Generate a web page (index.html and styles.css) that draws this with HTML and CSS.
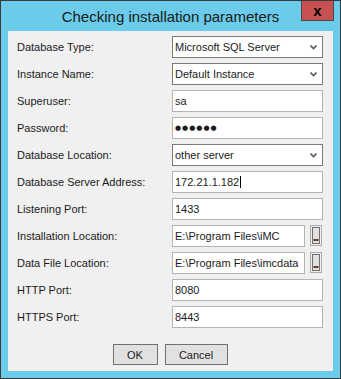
FILE: index.html
```html
<!doctype html>
<html lang="en">
<head>
    <meta charset="UTF-8">
    <title>Checking installation parameters</title>
    <link rel="stylesheet" href="styles.css">
</head>
<body>
    <div class="window">
        <div class="titlebar">
            <div class="title">Checking installation parameters</div>
            <div class="close">x</div>
        </div>
        <div class="panel">
            <div class="form">
                <div class="label">Database Type:</div>
                <div class="combo"><span>Microsoft SQL Server</span><svg class="arrow" width="7" height="5" viewBox="0 0 7 5"><path d="M0.5 0.5 L3.5 3.5 L6.5 0.5" fill="none" stroke="#5c5c5c" stroke-width="1.6"/></svg></div>

                <div class="label">Instance Name:</div>
                <div class="combo"><span>Default Instance</span><svg class="arrow" width="7" height="5" viewBox="0 0 7 5"><path d="M0.5 0.5 L3.5 3.5 L6.5 0.5" fill="none" stroke="#5c5c5c" stroke-width="1.6"/></svg></div>

                <div class="label">Superuser:</div>
                <div class="field">sa</div>

                <div class="label">Password:</div>
                <div class="field dots">●●●●●●</div>

                <div class="label">Database Location:</div>
                <div class="combo"><span>other server</span><svg class="arrow" width="7" height="5" viewBox="0 0 7 5"><path d="M0.5 0.5 L3.5 3.5 L6.5 0.5" fill="none" stroke="#5c5c5c" stroke-width="1.6"/></svg></div>

                <div class="label">Database Server Address:</div>
                <div class="field"><span class="caret">172.21.1.182</span></div>

                <div class="label">Listening Port:</div>
                <div class="field">1433</div>

                <div class="label">Installation Location:</div>
                <div class="browse-row">
                    <div class="field">E:\Program Files\iMC</div>
                    <div class="browse"><span><svg width="6" height="2" viewBox="0 0 6 2"><rect x="0" y="0" width="1" height="2" fill="#c8a000"/><rect x="1" y="0" width="1" height="2" fill="#333"/><rect x="2" y="0" width="1" height="2" fill="#d03030"/><rect x="3" y="0" width="1" height="2" fill="#2050c0"/><rect x="4" y="0" width="1" height="2" fill="#333"/><rect x="5" y="0" width="1" height="2" fill="#c8a000"/></svg></span></div>
                </div>

                <div class="label">Data File Location:</div>
                <div class="browse-row">
                    <div class="field">E:\Program Files\imcdata</div>
                    <div class="browse"><span><svg width="6" height="2" viewBox="0 0 6 2"><rect x="0" y="0" width="1" height="2" fill="#c8a000"/><rect x="1" y="0" width="1" height="2" fill="#333"/><rect x="2" y="0" width="1" height="2" fill="#d03030"/><rect x="3" y="0" width="1" height="2" fill="#2050c0"/><rect x="4" y="0" width="1" height="2" fill="#333"/><rect x="5" y="0" width="1" height="2" fill="#c8a000"/></svg></span></div>
                </div>

                <div class="label">HTTP Port:</div>
                <div class="field">8080</div>

                <div class="label">HTTPS Port:</div>
                <div class="field">8443</div>
            </div>
            <div class="buttons">
                <div class="btn ok">OK</div>
                <div class="btn cancel">Cancel</div>
            </div>
        </div>
    </div>
</body>
</html>
```

FILE: styles.css
```css
body {
    margin: 0;
    font-family: "Liberation Sans", Arial, sans-serif;
    font-size: 11px;
    color: #1b1b1b;
}
.window {
    width: 341px;
    height: 379px;
    box-sizing: border-box;
    border: 1px solid #3a3a3a;
    background-color: #6acbea;
    padding: 0 7px 7px 7px;
    display: flex;
    flex-direction: column;
}
.titlebar {
    height: 30px;
    display: grid;
    margin: 0 -7px;
}
.title {
    grid-area: 1 / 1;
    text-align: center;
    font-size: 15px;
    line-height: 15px;
    padding-top: 8px;
    color: #1a1a1a;
}
.close {
    grid-area: 1 / 1;
    justify-self: end;
    align-self: start;
    width: 31px;
    height: 19px;
    margin-right: 6px;
    background-color: #c75050;
    border: 1px solid #4a4a4a;
    border-top: none;
    font-family: "Liberation Sans", sans-serif;
    font-weight: bold;
    font-size: 15px;
    line-height: 19px;
    text-align: center;
    color: #000;
}
.panel {
    flex: 1;
    background-color: #f0f0f0;
    display: flex;
    flex-direction: column;
}
.form {
    display: grid;
    grid-template-columns: 155px 151px;
    grid-auto-rows: 22px;
    row-gap: 5px;
    padding: 5px 10px 0 9px;
}
.label {
    display: flex;
    align-items: center;
}
.combo,
.field {
    box-sizing: border-box;
    height: 22px;
    background: #fff;
    display: flex;
    align-items: center;
    padding-left: 2px;
    white-space: nowrap;
    overflow: hidden;
}
.combo {
    border: 1px solid #7a7a7a;
    justify-content: space-between;
    padding-right: 5px;
}
.field {
    border: 1px solid #b4b4b4;
}
.dots {
    font-family: "DejaVu Sans", sans-serif;
    font-size: 7px;
    letter-spacing: 1px;
}
.caret {
    border-right: 1px solid #000;
    padding-right: 1px;
}
.browse-row {
    display: flex;
    gap: 5px;
}
.browse-row .field {
    width: 133px;
}
.browse {
    box-sizing: border-box;
    width: 12px;
    height: 21px;
    border: 1px solid #acacac;
    padding: 1px;
    display: flex;
}
.browse span {
    flex: 1;
    border: 1px solid #707070;
    background: #e1e1e1;
    display: flex;
    align-items: flex-end;
    justify-content: center;
    padding-bottom: 2px;
}
.buttons {
    display: flex;
    justify-content: center;
    gap: 7px;
    margin-top: 16px;
    margin-left: -1px;
}
.btn {
    box-sizing: border-box;
    height: 21px;
    border: 1px solid #707070;
    background: #e1e1e1;
    display: flex;
    align-items: center;
    justify-content: center;
}
.ok {
    width: 45px;
}
.cancel {
    width: 63px;
}
```
